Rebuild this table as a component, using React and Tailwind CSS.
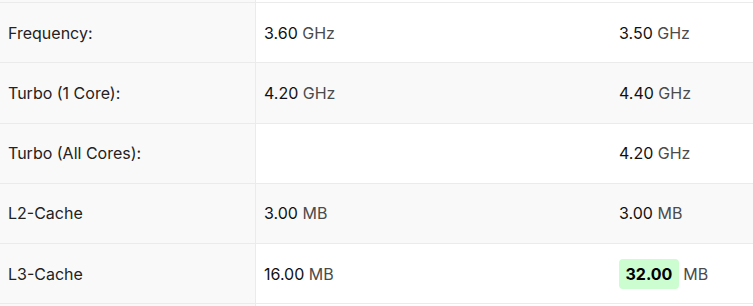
const rows = [
  { label: "Frequency:", a: ["3.60", "GHz"], b: ["3.50", "GHz"] },
  { label: "Turbo (1 Core):", a: ["4.20", "GHz"], b: ["4.40", "GHz"] },
  { label: "Turbo (All Cores):", a: null, b: ["4.20", "GHz"] },
  { label: "L2-Cache", a: ["3.00", "MB"], b: ["3.00", "MB"] },
  { label: "L3-Cache", a: ["16.00", "MB"], b: ["32.00", "MB"], best: true },
];

function Value({ v, best }) {
  if (!v) return null;
  return (
    <span>
      {best ? (
        <span className="rounded-[4px] bg-[#ccfdd0] px-[6.5px] py-[5px] font-bold text-black">
          {v[0]}
        </span>
      ) : (
        <span className="text-[#111]">{v[0]}</span>
      )}{" "}
      <span className="text-[#4b4b4b]">{v[1]}</span>
    </span>
  );
}

export default function App() {
  return (
    <div
      className="h-[306px] w-[753px] overflow-hidden bg-white text-[16px]"
      style={{ fontFamily: "Inter, 'Noto Sans', sans-serif" }}
    >
      <div className="grid h-[2px] grid-cols-[256px_356px_1fr]">
        <div className="border-r border-[#ebebeb] bg-[#f9f9f9]" />
        <div />
        <div />
      </div>
      {rows.map((r, i) => {
        const stripe = i % 2 === 1 ? "bg-[#f9f9f9]" : "bg-white";
        return (
          <div
            key={r.label}
            className="grid h-[60.25px] grid-cols-[256px_356px_1fr] border-t border-[#ebebeb]"
          >
            <div className="flex items-center border-r border-[#ebebeb] bg-[#f9f9f9] px-2 text-[#222]">
              {r.label}
            </div>
            <div className={`flex items-center pl-2 ${stripe}`}>
              <Value v={r.a} />
            </div>
            <div className={`flex items-center pl-[7px] ${stripe}`}>
              <Value v={r.b} best={r.best} />
            </div>
          </div>
        );
      })}
      <div className="grid h-[10px] grid-cols-[256px_356px_1fr] border-t border-[#ebebeb]">
        <div className="border-r border-[#ebebeb] bg-[#f9f9f9]" />
        <div />
        <div />
      </div>
    </div>
  );
}
